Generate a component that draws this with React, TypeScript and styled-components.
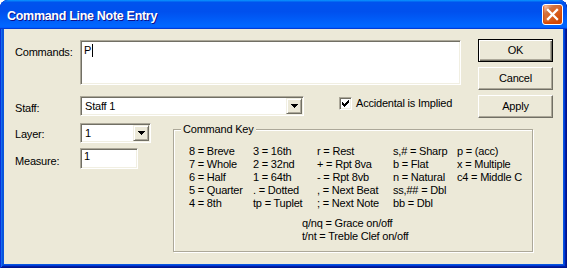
import React from 'react';
import styled, { createGlobalStyle, css } from 'styled-components';

const GlobalStyle = createGlobalStyle`
  html, body { margin: 0; padding: 0; background: #ffffff; }
  body {
    font-family: "Liberation Sans", Arial, sans-serif;
    font-size: 11px;
    letter-spacing: -0.2px;
    color: #000;
  }
  * { box-sizing: border-box; }
`;

const sunken = css`
  border: 1px solid;
  border-color: #aca899 #ffffff #ffffff #aca899;
  box-shadow: inset 1px 1px 0 #716f64, inset -1px -1px 0 #f1efe2;
  background: #ffffff;
`;

const raised = css`
  background: #ece9d8;
  border: 1px solid;
  border-color: #f1efe2 #716f64 #716f64 #f1efe2;
  box-shadow: inset 1px 1px 0 #ffffff, inset -1px -1px 0 #aca899;
`;

const Window = styled.div`
  width: 567px;
  height: 268px;
  display: flex;
  flex-direction: column;
  border-radius: 8px 8px 0 0;
  overflow: hidden;
  background: #0855dd;
  box-shadow: inset 1px 1px 0 #0831d9, inset -1px -1px 0 #00138c,
    inset 2px 2px 0 #166aee, inset -2px -2px 0 #001ea0,
    inset 3px 3px 0 #0855dd, inset -3px -3px 0 #003bda;
`;

const TitleBar = styled.div`
  flex: none;
  height: 29px;
  display: flex;
  align-items: center;
  justify-content: space-between;
  padding: 0 4px 0 7px;
  border-radius: 8px 8px 0 0;
  background: linear-gradient(180deg, #0997ff, #0053ee 8%, #0050ee 40%, #0066ff 88%, #0066ff 93%, #005bff 95%, #003dd7 96%, #003dd7);
`;

const Title = styled.div`
  padding-top: 2px;
  color: #ffffff;
  font-weight: bold;
  font-size: 12.5px;
  letter-spacing: -0.3px;
  text-shadow: 1px 1px 0 #0f1089;
  white-space: nowrap;
`;

const CloseButton = styled.div`
  width: 21px;
  height: 21px;
  border: 1px solid #ffffff;
  border-radius: 3px;
  display: flex;
  align-items: center;
  justify-content: center;
  background: radial-gradient(circle at 90% 90%, #cc4600 0, #dc6527 55%, #cd7546 70%, #ffccb2 90%, #ffffff 100%);
  box-shadow: inset 0 -1px 2px 1px #da4600;
`;

const Client = styled.div`
  flex: 1;
  margin: 0 4px 4px 4px;
  background: #ece9d8;
  padding: 10px 0 0 11px;
  display: flex;
  flex-direction: column;
`;

const TopSection = styled.div`
  display: flex;
  align-items: flex-start;
`;

const FormTop = styled.div`
  width: 463px;
  flex: none;
  padding-top: 1px;
`;

const Row = styled.div<{ $mt?: number }>`
  display: flex;
  align-items: flex-start;
  margin-top: ${(p) => p.$mt ?? 0}px;
`;

const Label = styled.div<{ $pt: number }>`
  width: 65px;
  flex: none;
  padding-top: ${(p) => p.$pt}px;
  line-height: 13px;
  white-space: nowrap;
`;

const EditBox = styled.div`
  ${sunken};
  width: 381px;
  height: 45px;
  padding: 3px 3px;
  line-height: 13px;
  display: flex;
  align-items: flex-start;
`;

const Caret = styled.span`
  display: inline-block;
  width: 1px;
  height: 13px;
  margin-left: 1px;
  background: #000;
`;

const Combo = styled.div<{ $w: number }>`
  ${sunken};
  width: ${(p) => p.$w}px;
  height: 20px;
  padding: 1px;
  display: flex;
  align-items: center;
`;

const ComboText = styled.div`
  flex: 1;
  padding-left: 3px;
  line-height: 13px;
  white-space: nowrap;
`;

const ArrowButton = styled.div`
  ${raised};
  width: 16px;
  height: 16px;
  flex: none;
  display: flex;
  align-items: center;
  justify-content: center;
`;

const TextInput = styled.div<{ $w: number }>`
  ${sunken};
  width: ${(p) => p.$w}px;
  height: 21px;
  padding: 1px 3px;
  line-height: 13px;
`;

const CheckRow = styled.div`
  margin-left: 35px;
  display: flex;
  align-items: center;
  gap: 4px;
  line-height: 13px;
  white-space: nowrap;
`;

const CheckBox = styled.div`
  ${sunken};
  width: 13px;
  height: 13px;
  margin-top: 1px;
  display: flex;
  align-items: center;
  justify-content: center;
`;

const ButtonColumn = styled.div`
  display: flex;
  flex-direction: column;
  gap: 5px;
`;

const DialogButton = styled.div<{ $default?: boolean }>`
  width: 75px;
  height: 23px;
  display: flex;
  align-items: center;
  justify-content: center;
  line-height: 13px;
  background: #ece9d8;
  ${(p) =>
    p.$default
      ? css`
          border: 1px solid #000000;
          box-shadow: inset 1px 1px 0 #ffffff, inset -1px -1px 0 #716f64, inset -2px -2px 0 #aca899;
        `
      : css`
          border: 1px solid;
          border-color: #ffffff #716f64 #716f64 #ffffff;
          box-shadow: inset -1px -1px 0 #aca899;
        `}
`;

const LowerSection = styled.div`
  display: flex;
  align-items: flex-start;
  margin-top: 5px;
`;

const LeftFields = styled.div`
  width: 136px;
  flex: none;
`;

const GroupBox = styled.div`
  position: relative;
  margin: 6px 0 0 22px;
  width: 360px;
  height: 123px;
  border: 1px solid #aca899;
  box-shadow: inset 1px 1px 0 #ffffff, 1px 1px 0 #ffffff;
  padding: 15px 0 0 15px;
`;

const Legend = styled.div`
  position: absolute;
  top: -7px;
  left: 7px;
  padding: 0 2px;
  background: #ece9d8;
  line-height: 13px;
  white-space: nowrap;
`;

const KeyGrid = styled.div`
  display: grid;
  grid-template-columns: 64px 64px 76px 64px auto;
  grid-auto-rows: 13px;
  line-height: 13px;
  white-space: nowrap;
`;

const Notes = styled.div`
  margin: 7px 0 0 113px;
  line-height: 13px;
  white-space: nowrap;
`;

const DownArrow = () => (
  <svg width="7" height="4" viewBox="0 0 7 4" shapeRendering="crispEdges">
    <polygon points="0,0 7,0 3.5,4" fill="#000" />
  </svg>
);

const keyRows: string[][] = [
  ['8 = Breve', '3 = 16th', 'r = Rest', 's,# = Sharp', 'p = (acc)'],
  ['7 = Whole', '2 = 32nd', '+ = Rpt 8va', 'b = Flat', 'x = Multiple'],
  ['6 = Half', '1 = 64th', '- = Rpt 8vb', 'n = Natural', 'c4 = Middle C'],
  ['5 = Quarter', '. = Dotted', ', = Next Beat', 'ss,## = Dbl', ''],
  ['4 = 8th', 'tp = Tuplet', '; = Next Note', 'bb = Dbl', ''],
];

export default function App() {
  return (
    <>
      <GlobalStyle />
      <Window>
        <TitleBar>
          <Title>Command Line Note Entry</Title>
          <CloseButton>
            <svg width="19" height="19" viewBox="0 0 19 19">
              <path d="M5 5 L14 14 M14 5 L5 14" stroke="#fff" strokeWidth="2.3" strokeLinecap="square" />
            </svg>
          </CloseButton>
        </TitleBar>
        <Client>
          <TopSection>
            <FormTop>
              <Row>
                <Label $pt={6}>Commands:</Label>
                <EditBox>
                  P<Caret />
                </EditBox>
              </Row>
              <Row $mt={11}>
                <Label $pt={6}>Staff:</Label>
                <Combo $w={224}>
                  <ComboText>Staff 1</ComboText>
                  <ArrowButton>
                    <DownArrow />
                  </ArrowButton>
                </Combo>
                <CheckRow>
                  <CheckBox>
                    <svg width="7" height="7" viewBox="0 0 7 7" shapeRendering="crispEdges">
                      <path d="M0 2 L2 4 L6 0 L7 0 L7 2 L2 7 L0 5 Z" fill="#000" />
                    </svg>
                  </CheckBox>
                  <span>Accidental is Implied</span>
                </CheckRow>
              </Row>
            </FormTop>
            <ButtonColumn>
              <DialogButton $default>OK</DialogButton>
              <DialogButton>Cancel</DialogButton>
              <DialogButton>Apply</DialogButton>
            </ButtonColumn>
          </TopSection>
          <LowerSection>
            <LeftFields>
              <Row>
                <Label $pt={5}>Layer:</Label>
                <Combo $w={71}>
                  <ComboText>1</ComboText>
                  <ArrowButton>
                    <DownArrow />
                  </ArrowButton>
                </Combo>
              </Row>
              <Row $mt={5}>
                <Label $pt={7}>Measure:</Label>
                <TextInput $w={58}>1</TextInput>
              </Row>
            </LeftFields>
            <GroupBox>
              <Legend>Command Key</Legend>
              <KeyGrid>
                {keyRows.flatMap((r, i) => r.map((c, j) => <div key={`${i}-${j}`}>{c}</div>))}
              </KeyGrid>
              <Notes>
                <div>q/nq = Grace on/off</div>
                <div>t/nt = Treble Clef on/off</div>
              </Notes>
            </GroupBox>
          </LowerSection>
        </Client>
      </Window>
    </>
  );
}
